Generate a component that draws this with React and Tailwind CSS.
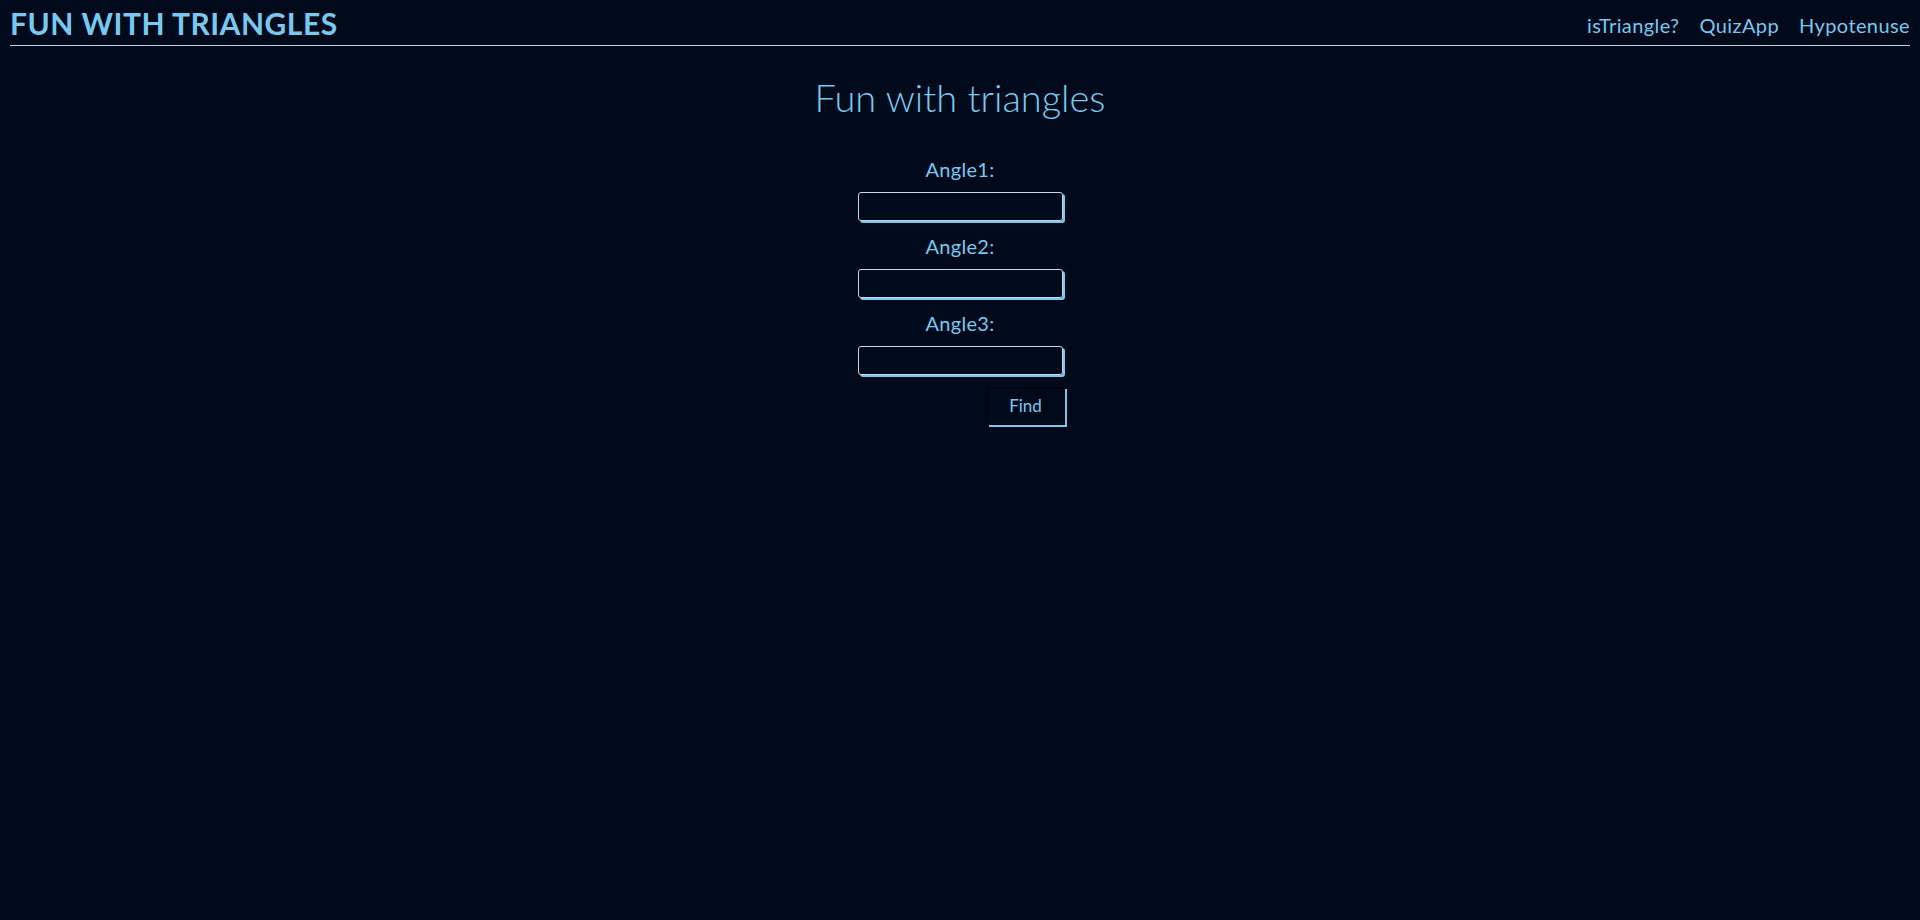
const LINKS = ['isTriangle?', 'QuizApp', 'Hypotenuse']

function AngleField({ label }) {
  return (
    <div className="flex flex-col items-center">
      <label className="text-[20px] leading-[28px] mb-[9px] tracking-[0.3px]">{label}</label>
      <input
        type="number"
        className="w-[205px] h-[29px] bg-transparent border border-[#c4d6e6] rounded-[3px] shadow-[2px_2px_0_#78c8f0] outline-none px-2 text-[#78c8f0]"
      />
    </div>
  )
}

export default function App() {
  return (
    <div className="min-h-[920px] bg-[#010a1a] text-[#78c8f0] font-['Lato','Open_Sans',sans-serif]">
      {/* Nav */}
      <nav className="mx-[10px] h-[46px] flex items-center justify-between border-b border-[#b6d2ea]">
        <span className="text-[30px] font-bold tracking-[0.5px] pt-[2px]">FUN WITH TRIANGLES</span>
        <ul className="flex gap-[20px] text-[20px] tracking-[0.4px] pt-[4px]">
          {LINKS.map((l) => (
            <li key={l}>
              <a href="#">{l}</a>
            </li>
          ))}
        </ul>
      </nav>

      <main className="flex flex-col items-center">
        <h1 className="mt-[23px] text-[38px] font-light leading-[56px]">Fun with triangles</h1>

        <div className="mt-[30px] flex flex-col gap-[11px]">
          <AngleField label="Angle1:" />
          <AngleField label="Angle2:" />
          <AngleField label="Angle3:" />
          <button className="self-end mt-[1px] mr-[-2px] w-[78px] h-[38px] border border-black shadow-[2px_2px_0_#78c8f0] text-[17px]">
            Find
          </button>
        </div>
      </main>
    </div>
  )
}
